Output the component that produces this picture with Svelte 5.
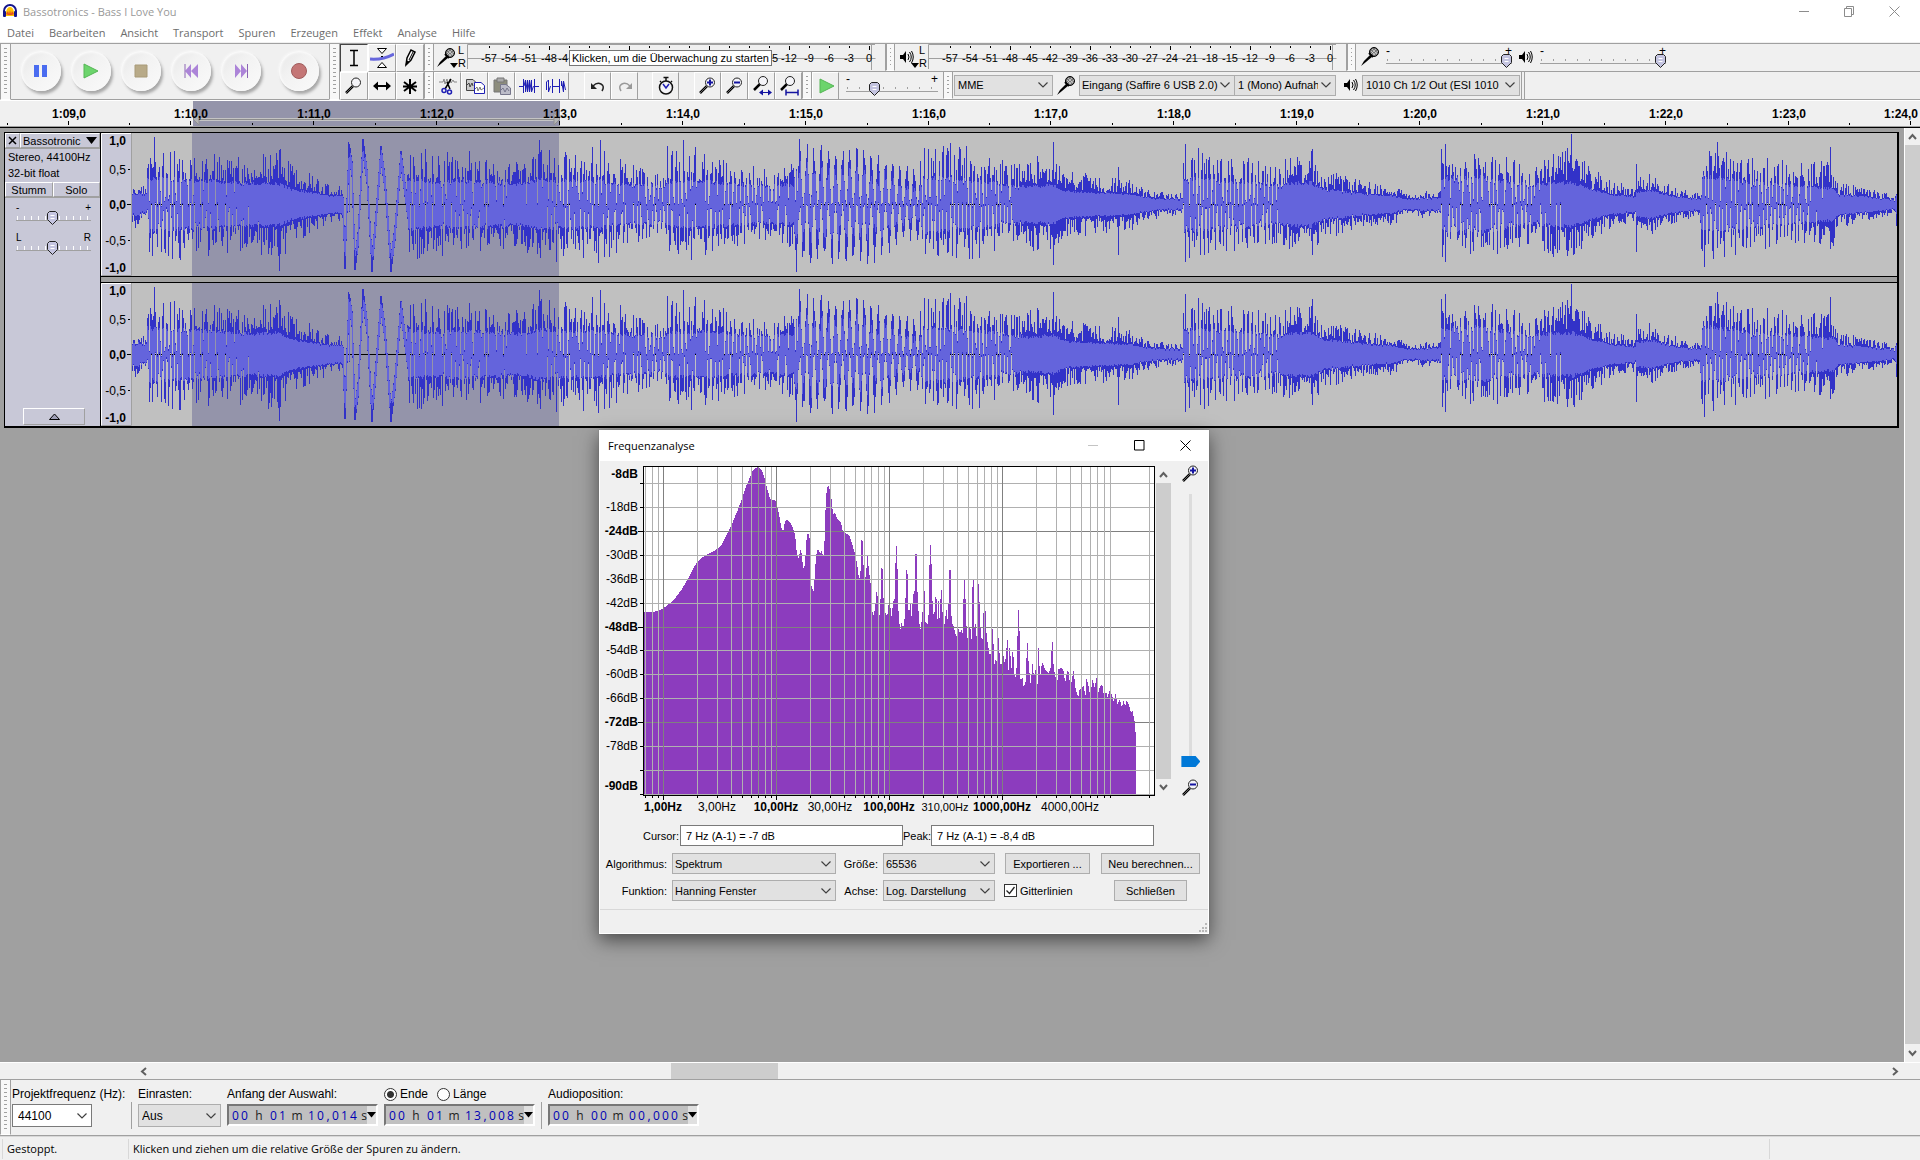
<script>
  // Hüllkurve: [x, Spitze, RMS, Dichte]
  const envelope = [
    [0, 0.36, 0.15, 1], [14, 0.26, 0.15, 1], [15, 0.86, 0.36, 0.2], [60, 0.8, 0.33, 0.3], [110, 0.72, 0.3, 0.5],
    [114, 0.7, 0.28, 0.9], [146, 0.82, 0.29, 1], [160, 0.58, 0.2, 1], [180, 0.44, 0.16, 1], [198, 0.28, 0.12, 1],
    [210, 0.32, 0.13, 1], [211, 0.8, 0.3, 0], [274, 0.82, 0.34, 0.4], [300, 0.78, 0.3, 0.6], [330, 0.8, 0.32, 0.4],
    [365, 0.66, 0.3, 0.7], [390, 0.68, 0.28, 0.9], [408, 0.88, 0.34, 0.8], [430, 0.8, 0.32, 0.5], [468, 0.85, 0.32, 0.4],
    [485, 0.72, 0.28, 0.4], [520, 0.52, 0.26, 0.3], [532, 0.42, 0.24, 0.3], [535, 0.88, 0.3, 0.4], [570, 0.82, 0.32, 0.6],
    [600, 0.7, 0.28, 0.4], [640, 0.5, 0.25, 0.4], [655, 0.66, 0.28, 0.8], [661, 0.6, 0.25, 0.6], [662, 0.92, 0.45, 0],
    [740, 0.84, 0.4, 0], [786, 0.5, 0.2, 0], [792, 0.88, 0.38, 0.4], [830, 0.88, 0.34, 0.4], [870, 0.66, 0.28, 0.4],
    [889, 0.56, 0.25, 0.9], [896, 0.76, 0.24, 0.9], [918, 0.64, 0.26, 1], [922, 0.72, 0.26, 1], [932, 0.5, 0.18, 1],
    [970, 0.42, 0.15, 1], [1000, 0.38, 0.13, 1], [1010, 0.25, 0.1, 1], [1028, 0.18, 0.07, 1], [1050, 0.16, 0.08, 1],
    [1051, 0.85, 0.36, 0.2], [1070, 0.8, 0.34, 0.2], [1120, 0.66, 0.3, 0.3], [1148, 0.6, 0.26, 0.4], [1152, 0.72, 0.28, 0.9],
    [1178, 0.78, 0.3, 1], [1192, 0.52, 0.2, 1], [1220, 0.38, 0.16, 1], [1262, 0.29, 0.11, 1], [1273, 0.17, 0.07, 1],
    [1308, 0.2, 0.09, 1], [1309, 0.82, 0.36, 0.4], [1325, 0.68, 0.36, 0.4], [1350, 0.8, 0.38, 0.4], [1380, 0.66, 0.3, 0.3],
    [1402, 0.56, 0.26, 0.4], [1412, 0.72, 0.28, 0.8], [1440, 0.84, 0.3, 1], [1460, 0.52, 0.2, 1], [1480, 0.34, 0.13, 1],
    [1503, 0.25, 0.1, 1], [1504, 0.5, 0.16, 1], [1520, 0.45, 0.19, 1], [1540, 0.27, 0.11, 1], [1567, 0.18, 0.07, 1],
    [1569, 0.86, 0.38, 0.3], [1590, 0.86, 0.36, 0.3], [1620, 0.66, 0.3, 0.3], [1660, 0.62, 0.26, 0.4], [1694, 0.64, 0.22, 0.5],
    [1701, 0.6, 0.22, 1], [1706, 0.32, 0.14, 1], [1735, 0.26, 0.1, 1], [1762, 0.12, 0.06, 1], [1764, 0.36, 0.12, 1], [1765, 0.36, 0.12, 1]
  ];
  const bassLine = [
    [211, 0], [213, -0.8], [217, 0.78], [220, 0.5], [223, -0.82], [226, -0.5], [231, 0.82], [235, 0.4], [240, -0.84],
    [244, -0.2], [249, 0.72], [253, 0.3], [259, -0.84], [263, -0.4], [269, 0.65], [275, 0]
  ];
  const spikes = { 22: [0.95, 0.4], 147: [0.76, 0.93], 217: [0.84, 0.1], 407: [0.9, 0.6], 468: [0.9, 0.4], 551: [0.9, 0.5], 664: [0.5, 0.95], 667: [0.92, 0.1], 921: [0.88, 0.84], 986: [0.52, 0.7], 1053: [0.84, 0.8], 1180: [0.78, 0.7], 1313: [0.84, 0.8], 1439: [0.98, 0.6], 1504: [0.56, 0.66], 1572: [0.4, 0.88], 1585: [0.88, 0.6], 1698: [0.8, 0.62] };

  const makeRandom = (seed) => () => {
    seed = (seed * 1664525 + 1013904223) % 4294967296;
    return seed / 4294967296;
  };

  const lookup = (points, x) => {
    let i = 1;
    while (i < points.length - 1 && points[i][0] < x) i++;
    const a = points[i - 1];
    const b = points[i];
    const t = Math.min(1, Math.max(0, (x - a[0]) / (b[0] - a[0])));
    return a.slice(1).map((v, k) => v + (b[k + 1] - v) * t);
  };

  const buildWave = (seed) => {
    const rnd = makeRandom(42);
    const vary = makeRandom(seed);
    let peaks = "";
    let rms = "";
    let phase = 0;
    for (let x = 0; x < 1765; x++) {
      const [peak, level, density] = lookup(envelope, x);
      let top;
      let bottom;
      let inner = level;
      const fast = x > 662 && x < 788;
      phase += fast ? 0.88 : 1.3 + rnd() * 0.7;
      const r1 = (0.42 + 0.58 * rnd() ** 1.5) * (0.88 + 0.12 * vary());
      const r2 = (0.42 + 0.58 * rnd() ** 1.5) * (0.88 + 0.12 * vary());
      if (x >= 211 && x < 275) {
        const c1 = lookup(bassLine, x)[0];
        const c2 = lookup(bassLine, x + 1)[0];
        top = Math.max(c1, c2) + 0.1;
        bottom = Math.min(c1, c2) - 0.1;
        inner = 0.7;
      } else {
        const s = Math.sin(phase);
        const amp = peak * (fast ? 0.7 + 0.3 * rnd() : 0.6 + 0.4 * rnd());
        const centre = s * amp * 0.52;
        const half = amp * 0.48;
        const solid = rnd() < density;
        top = solid ? peak * r1 : centre + half;
        bottom = solid ? -peak * r2 : centre - half;
        if (fast) inner = level * (0.7 + 0.6 * rnd());
      }
      if (spikes[x]) {
        top = spikes[x][0];
        bottom = -spikes[x][1];
      }
      peaks += `M${x + 0.5} ${Math.round(71 - top * 71)}V${Math.round(72 - bottom * 71)}`;
      const wobble = inner * (0.9 + 0.2 * vary());
      const innerTop = Math.min(top - 0.02, wobble);
      const innerBottom = Math.max(bottom + 0.02, -wobble);
      if (innerTop > innerBottom) {
        rms += `M${x + 0.5} ${Math.round(71 - innerTop * 71)}V${Math.round(72 - innerBottom * 71)}`;
      }
    }
    return { peaks, rms };
  };

  const channels = [buildWave(7), buildWave(99)];

  const menus = ["Datei", "Bearbeiten", "Ansicht", "Transport", "Spuren", "Erzeugen", "Effekt", "Analyse", "Hilfe"];
  const transport = ["Pause", "Wiedergabe", "Stopp", "Anfang", "Ende", "Aufnahme"];
  const tools = ["Auswahl", "Hüllkurve", "Zeichnen", "Zoom", "Verschieben", "Multi"];
  const meterLabels = Array.from({ length: 20 }, (_, i) => i * 3 - 57);
  // unter dem Hinweistext liegen keine ganzen Zahlen, nur die Ränder schauen heraus
  const coveredLabels = meterLabels.map((label, i) => (i === 4 ? "-4" : i === 14 ? "5" : i > 4 && i < 14 ? "" : label));
  const rulerLabels = Array.from({ length: 16 }, (_, i) => (i === 15 ? "1:24,0" : `1:${String(i + 9).padStart(2, "0")},0`));
  const rulerX = (i) => Math.round(68.5 + i * 122.86);

  const spectrum =
    "134,564 158,564 165,561 180,555 190,547 200,538 210,527 220,512 230,495 240,475 250,455 260,430 270,411 280,400 290,392 300,386 310,380 320,372 330,360 340,335 350,312 360,285 370,255 378,230 385,205 392,180 400,158 405,143 412,133 418,128 424,130 430,140 436,162 442,190 447,213 452,228 462,227 467,240 472,270 476,300 480,318 483,318 486,295 492,285 498,292 505,305 510,325 514,350 516,388 521,402 525,375 529,390 531,425 534,435 537,410 540,350 543,328 546,328 548,345 550,440 553,490 558,500 561,450 564,395 568,373 574,388 578,378 582,400 585,350 588,235 591,190 594,183 597,193 601,190 603,240 607,270 611,263 616,283 625,292 630,318 638,328 646,332 652,352 660,385 666,417 671,470 675,435 677,340 679,340 681,405 684,462 688,458 691,395 693,395 695,440 699,470 702,545 706,577 711,550 714,502 716,502 719,560 723,578 726,432 729,432 731,515 735,565 741,575 744,540 748,540 751,580 756,530 760,520 762,366 765,366 767,470 769,570 773,620 777,590 780,615 785,575 788,438 791,438 793,555 796,560 798,530 801,577 805,512 809,500 811,388 814,388 816,505 818,550 820,595 825,624 827,562 829,562 831,500 834,500 836,600 840,595 843,605 844,510 847,363 849,363 851,425 853,525 857,588 861,512 863,512 865,610 867,530 869,530 871,592 874,498 876,498 878,560 881,620 885,580 888,558 891,590 893,540 895,438 898,438 900,570 903,600 907,610 912,640 917,612 922,628 925,615 929,632 931,465 933,465 936,545 939,650 943,625 947,600 950,655 953,465 956,465 958,650 959,585 963,640 965,480 969,480 971,580 974,640 978,645 980,565 985,560 988,640 992,670 996,695 999,680 1001,615 1004,615 1006,725 1010,705 1014,715 1016,640 1018,640 1021,720 1025,718 1028,680 1032,715 1036,700 1038,648 1040,648 1042,740 1044,670 1046,670 1049,740 1053,665 1057,750 1060,760 1064,700 1065,558 1068,558 1070,645 1072,770 1077,760 1080,790 1085,770 1088,655 1090,655 1092,720 1097,780 1102,715 1105,755 1110,735 1115,790 1116,670 1118,670 1120,770 1125,713 1130,725 1135,740 1142,745 1147,730 1150,653 1152,653 1154,725 1158,755 1163,780 1166,735 1172,730 1178,735 1183,775 1188,740 1192,745 1196,800 1200,760 1204,738 1208,790 1215,820 1219,795 1224,790 1229,785 1233,820 1236,760 1240,780 1245,815 1251,765 1256,790 1261,760 1265,805 1270,785 1275,780 1280,820 1284,800 1288,818 1294,798 1299,810 1303,830 1308,810 1313,840 1319,825 1324,850 1328,828 1332,845 1336,828 1341,840 1346,865 1350,858 1354,885 1357,895 1358,945 1359,1110 134,1110";

  const freqX = (hz) => Math.round(63 + Math.log10(hz) * 113);
  const freqLines = [];
  for (const decade of [0.1, 1, 10, 100, 1000]) {
    for (let n = 1; n < 10; n++) {
      if (n * decade >= 0.69) freqLines.push({ x: freqX(n * decade), major: n === 1 });
    }
  }
  freqLines.push({ x: freqX(20000), major: false });
  const freqLabels = [[1, "1,00Hz", 1], [3, "3,00Hz", 0], [10, "10,00Hz", 1], [30, "30,00Hz", 0], [100, "100,00Hz", 1], [310, "310,00Hz", 2], [1000, "1000,00Hz", 1], [4000, "4000,00Hz", 0]];
  const dbLines = Array.from({ length: 14 }, (_, i) => ({ y: Math.round(22 + i * 23.92), major: i % 4 === 2 }));
  const dbLabels = [[13, "-8dB", 1], [46, "-18dB", 0], [70, "-24dB", 1], [94, "-30dB", 0], [118, "-36dB", 0], [142, "-42dB", 0], [166, "-48dB", 1], [189, "-54dB", 0], [213, "-60dB", 0], [237, "-66dB", 0], [261, "-72dB", 1], [285, "-78dB", 0], [325, "-90dB", 1]];

  let sampleRate = $state("44100");
  let rangeEnd = $state("ende");
  let grid = $state(true);
  let cursorText = $state("7 Hz (A-1) = -7 dB");
  let peakText = $state("7 Hz (A-1) = -8,4 dB");
</script>

{#snippet mic()}
  <svg class="mic" width="18" height="19" viewBox="0 0 18 19">
    <path d="M0 19 3 14 10 7 12 9 5 15Z" fill="#000" />
    <circle cx="13" cy="5" r="4.5" fill="#777" stroke="#000" />
    <path d="M10 4 14 8M11 2 16 7M10 7 15 2M12 8 17 4" stroke="#ddd" stroke-width=".7" />
    <path d="M8 6 12 10" stroke="#000" stroke-width="2" />
  </svg>
{/snippet}

{#snippet speaker()}
  <svg width="14" height="14" viewBox="0 0 14 14">
    <path d="M0 5H3L6 1V13L3 9H0Z" fill="#000" />
    <path d="M8 4Q10 7 8 10M9.500 2Q13 7 9.500 12M11.500 1Q15 7 11.500 13" fill="none" stroke="#000" />
  </svg>
{/snippet}

{#snippet lens(kind)}
  <svg width="20" height="20" viewBox="0 0 20 20">
    {#if kind === "sel" || kind === "fit"}
      <path d="M2 14 8 8" stroke="#000" stroke-width="2.500" />
      <circle cx="11" cy="5" r="4.500" fill="#f4f4f8" stroke="#222" />
    {:else}
      <path d="M2 17 9 10" stroke="#000" stroke-width="2.500" />
      <path d="M2 17 9 10" stroke="#aaa" stroke-width=".6" />
      <circle cx="12" cy="6.500" r="4.500" fill="#f4f4f8" stroke="#222" />
    {/if}
    {#if kind === "in"}<path d="M12 3.500V9.500M9 6.500H15" stroke="#1414a0" stroke-width="2" />{/if}
    {#if kind === "out"}<path d="M9 6.500H15" stroke="#1414a0" stroke-width="2" />{/if}
    {#if kind === "sel"}<path d="M8 16.500H19" stroke="#1414a0" /><path d="M7 16.500 11 13.500V19.500ZM20 16.500 16 13.500V19.500Z" fill="#1414a0" />{/if}
    {#if kind === "fit"}<path d="M7 16.500H19M7 13.500V19.500M19 13.500V19.500" stroke="#1414a0" stroke-width="1.500" />{/if}
  </svg>
{/snippet}

{#snippet meter(labels)}
  <svg class="meter" width="409" height="27">
    <path d="M.5 25V.5H408M.5 14.500H408.500M404.500 1V26" fill="none" stroke="#a0a0a0" />
    {#each labels as label, i}
      <path d="M{i * 20 + 22.5} 2V{i % 4 === 3 ? 6 : 4}" stroke="#000" />
      {#if label === "-4"}
        <text x="101" y="18" text-anchor="end">{label}</text>
      {:else if label === "5"}
        <text x="305" y="18">{label}</text>
      {:else}
        <text x={i * 20 + 22} y="18" text-anchor="middle">{label}</text>
      {/if}
    {/each}
  </svg>
{/snippet}

{#snippet timeField(label, parts)}
  <div class="time-field" role="group" aria-label={label}>
    {#each parts as part}
      {#if part === ","}
        <span class="comma">,</span>
      {:else if part.length === 1}
        <span class="unit">{part}</span>
      {:else}
        {#each part as digit}<span class="digit">{digit}</span>{/each}
      {/if}
    {/each}
    <button class="time-format" aria-label="Format">
      <svg width="9" height="6" viewBox="0 0 9 6"><path d="M0 0H9L4.500 5.500Z" /></svg>
    </button>
  </div>
{/snippet}

<div class="app">
  <header class="titlebar">
    <svg width="16" height="16" viewBox="0 0 16 16">
      <path d="M2 12V8A6 6 0 0 1 14 8V12" fill="none" stroke="#14148c" stroke-width="2" />
      <path d="M4 13V9Q5 4 8 4T12 9V13Z" fill="#ffc400" />
      <path d="M4 11 6 8 7 11 8 7 9 11 10 8 12 11 10 12H6Z" fill="#e8501e" />
      <rect x="1" y="8" width="3" height="6" rx="1" fill="#14148c" />
      <rect x="12" y="8" width="3" height="6" rx="1" fill="#14148c" />
    </svg>
    <span class="title">Bassotronics - Bass I Love You</span>
    <button aria-label="Minimieren"><svg width="11" height="11"><path d="M0 5.500H10" stroke="#8c8c8c" /></svg></button>
    <button aria-label="Wiederherstellen"><svg width="11" height="11"><path d="M.5 2.500H7.500V10.500H.5ZM2.500 2V.5H9.500V8.500H8" fill="none" stroke="#8c8c8c" /></svg></button>
    <button aria-label="Beenden"><svg width="11" height="11"><path d="M.5.5 10.500 10.500M10.500.5.5 10.500" stroke="#8c8c8c" /></svg></button>
  </header>

  <nav class="menubar">
    {#each menus as menu}
      <button>{menu}</button>
    {/each}
  </nav>

  <div class="toolbars">
    <div class="grip"></div>
    <div class="transport">
      {#each transport as name, i}
        <button class="round" class:record={i === 5} aria-label={name}>
          <svg width="20" height="20" viewBox="0 0 20 20">
            {#if i === 0}<path d="M3 4H8V16H3ZM11 4H16V16H11Z" fill="#4a6cf0" />{/if}
            {#if i === 1}<path d="M3 3 17 10 3 17Z" fill="#6cd46c" stroke="#55b655" />{/if}
            {#if i === 2}<path d="M4 4H16V16H4Z" fill="#b8aa88" stroke="#a89a78" />{/if}
            {#if i === 3}<path d="M10 3V17L4 10ZM17 3V17L10 10Z" fill="#ac84d8" /><path d="M4 3V17" stroke="#8c64b4" />{/if}
            {#if i === 4}<path d="M4 3V17L10 10ZM10 3V17L16 10Z" fill="#ac84d8" /><path d="M16.500 3V17" stroke="#8c64b4" />{/if}
            {#if i === 5}<circle cx="10" cy="10" r="7.500" fill="#c47676" stroke="#a05c5c" />{/if}
          </svg>
        </button>
      {/each}
    </div>
    <div class="grip"></div>
    <div class="tools">
      {#each tools as tool, i}
        <button class="tool" class:pressed={i === 0} aria-label={tool}>
          {#if i === 3}
            {@render lens("")}
          {:else}
            <svg width="24" height="22" viewBox="0 0 24 22">
              {#if i === 0}<path d="M8 3.500H16M8 18.500H16M12 4V18" stroke="#000" stroke-width="1.500" />{/if}
              {#if i === 1}<path d="M0 12Q13 13 24 7" fill="none" stroke="#6666dc" stroke-width="3" /><path d="M7.500 1.500H16.500L12 6.500ZM7.500 20.500H16.500L12 15.500ZM11 9.500H13" fill="#fff" stroke="#000" />{/if}
              {#if i === 2}<path d="M8 18 9 11 13 3 17 5 13 13Z" fill="#fff" stroke="#000" stroke-width="1.500" /><path d="M8 18 9 14 11 15ZM11 13 15 5" stroke="#000" />{/if}
              {#if i === 4}<path d="M4 11H20" stroke="#000" stroke-width="2" /><path d="M3 11 8 6.500V15.500ZM21 11 16 6.500V15.500Z" />{/if}
              {#if i === 5}<path d="M12 4V19M6 7 18 16M18 7 6 16M5 11.500H19" stroke="#000" stroke-width="2" />{/if}
            </svg>
          {/if}
        </button>
      {/each}
    </div>

    <div class="rows">
      <div class="row">
        <div class="grip"></div>
        <div class="meter-head">
          {@render mic()}
          <svg class="drop" width="8" height="5"><path d="M0 0H8L4 5Z" /></svg>
          <span>L</span><span>R</span>
        </div>
        <div class="meter-wrap">
          {@render meter(coveredLabels)}
          <div class="tooltip">Klicken, um die Überwachung zu starten</div>
        </div>
        <div class="grip far"></div>
        <div class="meter-head">
          {@render speaker()}
          <svg class="drop" width="8" height="5"><path d="M0 0H8L4 5Z" /></svg>
          <span>L</span><span>R</span>
        </div>
        {@render meter(meterLabels)}
        <div class="grip far"></div>
        <div class="mixer">
          {@render mic()}
          <label class="range"><span>-</span><span>+</span><input type="range" value="100" aria-label="Aufnahmelautstärke" /></label>
          {@render speaker()}
          <label class="range"><span>-</span><span>+</span><input type="range" value="100" aria-label="Wiedergabelautstärke" /></label>
        </div>
      </div>

      <div class="row">
        <div class="grip"></div>
        <button class="tool" aria-label="Ausschneiden">
          <svg width="20" height="20"><path d="M1 6H5L6 3 7 8 9 3 10 8 12 3 13 7 15 4 16 6H19" fill="none" stroke="#888" /><path d="M13 3 7 13M9 6 12 13" stroke="#000" stroke-width="1.500" /><circle cx="6" cy="14.500" r="2" fill="none" stroke="#1e1eb4" stroke-width="1.500" /><circle cx="11.500" cy="16" r="2" fill="none" stroke="#1e1eb4" stroke-width="1.500" /></svg>
        </button>
        <button class="tool" aria-label="Kopieren">
          <svg width="20" height="20"><path d="M1.500 3.500H8L10.500 6V14.500H1.500Z" fill="#ccc" stroke="#444" /><path d="M2 9 4 7 5 11 7 7 8 10" fill="none" stroke="#444" /><path d="M9.500 6.500H16L19.500 9.500V17.500H9.500Z" fill="#fff" stroke="#1e1eb4" /><path d="M10 13 12 11 13 15 15 11 16 14 19 12" fill="none" stroke="#777" /></svg>
        </button>
        <button class="tool" aria-label="Einfügen">
          <svg width="20" height="20"><path d="M2 4H15V16H2Z" fill="#8c8c7c" stroke="#777" /><path d="M5 2H12V6H5Z" fill="#aaa" stroke="#777" /><path d="M8.500 8.500H14L18.500 12V18.500H8.500Z" fill="#bcbcc8" stroke="#77778c" /><path d="M9 14 11 12 13 16 15 12 17 15" fill="none" stroke="#77778c" /></svg>
        </button>
        <button class="tool" aria-label="Trimmen">
          <svg width="20" height="20"><path d="M0 10.500H4.500M4.500 3V17M15.500 3V17M15.500 10.500H20" stroke="#1e1eb4" /><path d="M5 10 6.500 4V16L8.500 4V16L10.500 4V16L12.500 4V16L14.500 10" fill="none" stroke="#1e1eb4" /></svg>
        </button>
        <button class="tool" aria-label="Stille">
          <svg width="20" height="20"><path d="M.5 14V6L2.500 4V16L4.500 10M6.500 3V17M6.500 10.500H13.500M13.500 3V17M15.500 10V5L17.500 16V5L19.500 14" fill="none" stroke="#1e1eb4" /></svg>
        </button>
        <button class="tool spaced" aria-label="Rückgängig">
          <svg width="20" height="20"><path d="M5 10Q9 6 13 8 17 10 14 15" fill="none" stroke="#222" stroke-width="1.500" /><path d="M3 7V13H9Z" fill="#222" /></svg>
        </button>
        <button class="tool" aria-label="Wiederholen">
          <svg width="20" height="20"><path d="M15 10Q11 6 7 8 3 10 6 15" fill="none" stroke="#999" stroke-width="1.500" /><path d="M17 7V13H11Z" fill="#999" /></svg>
        </button>
        <button class="tool timer" aria-label="Sync-Lock">
          <svg width="20" height="20"><circle cx="10" cy="11.500" r="6.500" fill="#f4f4f8" stroke="#111" stroke-width="1.500" /><path d="M10 5V2M7.500 1.500H12.500M4 6 5 5M15 5 16 6" stroke="#111" stroke-width="1.500" /><path d="M7 8 10 12 13 8" fill="none" stroke="#1e1eb4" stroke-width="1.500" /></svg>
        </button>
        <button class="tool spaced" aria-label="Vergrößern">{@render lens("in")}</button>
        <button class="tool" aria-label="Verkleinern">{@render lens("out")}</button>
        <button class="tool" aria-label="Auswahl einpassen">{@render lens("sel")}</button>
        <button class="tool" aria-label="Projekt einpassen">{@render lens("fit")}</button>
        <div class="grip"></div>
        <button class="tool" aria-label="Mit Geschwindigkeit abspielen">
          <svg width="20" height="20"><path d="M4 3 18 10 4 17Z" fill="#6cd46c" stroke="#55b655" /></svg>
        </button>
        <label class="range speed"><span>-</span><span>+</span><input type="range" value="28" aria-label="Geschwindigkeit" /></label>
        <div class="grip"></div>
        <div class="devices">
          <select class="host" aria-label="Host"><option>MME</option></select>
          {@render mic()}
          <select class="input" aria-label="Eingang"><option>Eingang (Saffire 6 USB 2.0)</option></select>
          <select class="mono" aria-label="Kanäle"><option>1 (Mono) Aufnahmekanal</option></select>
          {@render speaker()}
          <select class="output" aria-label="Ausgang"><option>1010 Ch 1/2 Out (ESI 1010 .</option></select>
        </div>
        <div class="row-end"></div>
      </div>
    </div>
  </div>

  <svg class="ruler" width="100%" height="26">
    <rect x="193" width="367" height="25" fill="#9494aa" />
    <path d="M199 18.500H554" stroke="#c4c4c4" stroke-width="3" />
    <path d="M199 18.500H554" stroke="#8c8c8c" />
    <path d="M193 18 199 12V24ZM560 18 554 12V24Z" fill="#b4b4b4" stroke="#909090" />
    {#each rulerLabels as label, i}
      <path d="M{rulerX(i) - 0.5} 20V24M{rulerX(i) - 61.5} 22V24" stroke="#000" />
      <text x={i === 15 ? 1901 : rulerX(i)} y="17" text-anchor="middle">{label}</text>
    {/each}
  </svg>

  <main class="workspace">
    <div class="canvas">
      <section class="track">
        <div class="panel">
          <div class="track-title">
            <button aria-label="Spur schließen"><svg width="9" height="9"><path d="M1 1 8 8M8 1 1 8" stroke="#000" stroke-width="1.500" /></svg></button>
            <button class="name">Bassotronic <svg width="11" height="7"><path d="M0 0H11L5.500 7Z" /></svg></button>
          </div>
          <p>Stereo, 44100Hz</p>
          <p>32-bit float</p>
          <div class="mutes"><button>Stumm</button><button>Solo</button></div>
          <label class="range gain"><span>-</span><span>+</span><input type="range" value="48" aria-label="Lautstärke" /></label>
          <label class="range gain"><span>L</span><span>R</span><input type="range" value="48" aria-label="Balance" /></label>
          <button class="collapse" aria-label="Einklappen"><svg width="11" height="7"><path d="M.5 6.500H10.500L5.500 1Z" fill="#9c9cb4" stroke="#000" /></svg></button>
        </div>
        <div class="channels">
          {#each channels as channel}
            <div class="channel">
              <svg class="scale" width="31" height="143">
                <path d="M.5 142V.5H30" fill="none" stroke="#fff" />
                <path d="M1 142.500H30.500V0" fill="none" stroke="#a0a0a0" />
                <g text-anchor="end">
                  <text class="bold" x="25" y="12">1,0</text>
                  <text x="25" y="41">0,5</text>
                  <text class="bold" x="25" y="76">0,0</text>
                  <text x="25" y="112">-0,5</text>
                  <text class="bold" x="25" y="139">-1,0</text>
                </g>
                <path d="M27 36.500H29M26 71.500H30M27 107.500H29" stroke="#000" />
              </svg>
              <svg class="wave" viewBox="0 0 1765 143" preserveAspectRatio="none" shape-rendering="crispEdges">
                <rect width="1765" height="143" fill="#c0c0c0" />
                <rect x="60" width="367" height="143" fill="#9494aa" />
                <path d="M0 71.500H1765" stroke="#000" />
                <path d={channel.peaks} stroke="#3232c8" />
                <path d={channel.rms} stroke="#6464dc" />
              </svg>
            </div>
          {/each}
        </div>
      </section>
    </div>
    <div class="vscroll">
      <button aria-label="Nach oben"><svg width="9" height="7"><path d="M1 6 4.500 2 8 6" fill="none" stroke="#606060" stroke-width="2" /></svg></button>
      <div class="thumb"></div>
      <button aria-label="Nach unten"><svg width="9" height="7"><path d="M1 1 4.500 5 8 1" fill="none" stroke="#606060" stroke-width="2" /></svg></button>
    </div>
  </main>

  <div class="hscroll">
    <button aria-label="Nach links"><svg width="7" height="9"><path d="M6 1 2 4.500 6 8" fill="none" stroke="#606060" stroke-width="2" /></svg></button>
    <div class="rail"><div class="thumb"></div></div>
    <button aria-label="Nach rechts"><svg width="7" height="9"><path d="M1 1 5 4.500 1 8" fill="none" stroke="#606060" stroke-width="2" /></svg></button>
  </div>

  <div class="selection">
    <div class="grip"></div>
    <div class="field rate">
      <label for="rate">Projektfrequenz (Hz):</label>
      <select id="rate" bind:value={sampleRate}><option>44100</option></select>
    </div>
    <div class="divider"></div>
    <div class="field snap">
      <label for="snap">Einrasten:</label>
      <select id="snap"><option>Aus</option></select>
    </div>
    <div class="field">
      <span>Anfang der Auswahl:</span>
      {@render timeField("Anfang der Auswahl", ["00", "h", "01", "m", "10", ",", "014", "s"])}
    </div>
    <div class="field">
      <div class="radios">
        <label><input type="radio" bind:group={rangeEnd} value="ende" />Ende</label>
        <label><input type="radio" bind:group={rangeEnd} value="laenge" />Länge</label>
      </div>
      {@render timeField("Ende", ["00", "h", "01", "m", "13", ",", "008", "s"])}
    </div>
    <div class="divider"></div>
    <div class="field">
      <span>Audioposition:</span>
      {@render timeField("Audioposition", ["00", "h", "00", "m", "00", ",", "000", "s"])}
    </div>
  </div>

  <footer class="status">
    <span>Gestoppt.</span>
    <span>Klicken und ziehen um die relative Größe der Spuren zu ändern.</span>
    <span></span>
  </footer>

  <div class="dialog" role="dialog" aria-label="Frequenzanalyse">
    <header>
      <h2>Frequenzanalyse</h2>
      <button aria-label="Minimieren"><svg width="11" height="11"><path d="M0 5.500H10" stroke="#c4c4c4" /></svg></button>
      <button aria-label="Maximieren"><svg width="11" height="11"><path d="M.5.5H10V10H.5Z" fill="none" stroke="#000" /></svg></button>
      <button aria-label="Schließen"><svg width="11" height="11"><path d="M.5.5 10.500 10.500M10.500.5.5 10.500" stroke="#000" /></svg></button>
    </header>
    <div class="plot-row">
      <svg class="plot" width="556" height="356">
        <rect x="43" y="5" width="512" height="329" fill="#fff" />
        <svg x="43" y="5" width="512" height="328" viewBox="134 125 1272 984" preserveAspectRatio="none" shape-rendering="crispEdges">
          <polygon points={spectrum} fill="#8c3cbe" />
        </svg>
        {#if grid}
          {#each dbLines as line}
            <path d="M43 {line.y + 0.5}H555" stroke={line.major ? "#808080" : "#b0b0b0"} />
          {/each}
          {#each freqLines as line}
            <path d="M{line.x + 0.5} 5V334" stroke={line.major ? "#808080" : "#b0b0b0"} />
          {/each}
          <path d="M158.500 5V334" stroke="#8c8c8c" />
        {/if}
        <rect x="43.500" y="5.500" width="511" height="329" fill="none" stroke="#000" />
        {#each dbLines as line}
          <path d="M{line.major ? 38 : 40} {line.y + 0.5}H43" stroke="#000" />
        {/each}
        {#each freqLines as line}
          <path d="M{line.x + 0.5} 335V{line.major ? 339 : 337}" stroke="#000" />
        {/each}
        {#each dbLabels as [y, label, bold]}
          <text class:bold x="38" y={y + 4} text-anchor="end">{label}</text>
        {/each}
        {#each freqLabels as [hz, label, kind]}
          <text class:bold={kind === 1} class:small={kind === 2} x={freqX(hz)} y="350" text-anchor="middle">{label}</text>
        {/each}
      </svg>
      <div class="vscroll">
        <button aria-label="Hoch"><svg width="9" height="7"><path d="M1 6 4.500 2 8 6" fill="none" stroke="#606060" stroke-width="2" /></svg></button>
        <div class="thumb"></div>
        <button aria-label="Runter"><svg width="9" height="7"><path d="M1 1 4.500 5 8 1" fill="none" stroke="#606060" stroke-width="2" /></svg></button>
      </div>
      <div class="zoom">
        {@render lens("in")}
        <input type="range" value="100" aria-label="Zoom" />
        {@render lens("out")}
      </div>
    </div>
    <div class="readout">
      <label for="cursor">Cursor:</label><input id="cursor" bind:value={cursorText} />
      <label for="peak">Peak:</label><input id="peak" bind:value={peakText} />
    </div>
    <div class="options">
      <label for="algorithm">Algorithmus:</label>
      <select id="algorithm"><option>Spektrum</option></select>
      <label for="size">Größe:</label>
      <select id="size"><option>65536</option></select>
      <button>Exportieren ...</button>
      <button>Neu berechnen...</button>
      <label for="window">Funktion:</label>
      <select id="window"><option>Hanning Fenster</option></select>
      <label for="axis">Achse:</label>
      <select id="axis"><option>Log. Darstellung</option></select>
      <label class="check"><input type="checkbox" bind:checked={grid} />Gitterlinien</label>
      <button class="close">Schließen</button>
    </div>
    <div class="dialog-status">
      <svg width="10" height="10" fill="#b8b8b8"><path d="M7 0H9V2H7ZM7 4H9V6H7ZM4 4H6V6H4ZM7 7H9V9H7ZM4 7H6V9H4ZM1 7H3V9H1Z" /></svg>
    </div>
  </div>
</div>

<style>
  :global(body) {
    margin: 0;
    overflow: hidden;
  }

  .app {
    display: flex;
    flex-direction: column;
    height: 100vh;
    background: #f0f0f0;
    color: #000;
    font-family: "Liberation Sans", Arial, sans-serif;
    font-size: 12px;
    position: relative;
    --chevron: url("data:image/svg+xml,%3Csvg xmlns='http://www.w3.org/2000/svg' width='10' height='6'%3E%3Cpath d='M.5.5 5 5 9.500.5' fill='none' stroke='%23404040' stroke-width='1.200'/%3E%3C/svg%3E");
    --thumb: url("data:image/svg+xml,%3Csvg xmlns='http://www.w3.org/2000/svg' width='11' height='14'%3E%3Cpath d='M2.500.5H8.500L10.500 2.500V8.500L5.500 13.500.5 8.500V2.500Z' fill='%23c4c4e0' stroke='%23222'/%3E%3Cpath d='M3.500 4.500H7.500M3.500 7.500H7.500' stroke='%23fff'/%3E%3C/svg%3E");
  }

  button {
    display: flex;
    align-items: center;
    justify-content: center;
    padding: 0;
    border: 0;
    background: none;
    color: inherit;
    font: inherit;
  }

  svg {
    display: block;
    flex: none;
  }

  select {
    box-sizing: border-box;
    appearance: none;
    height: 21px;
    padding: 0 17px 0 3px;
    border: 1px solid #adadad;
    border-radius: 0;
    background: #e1e1e1 var(--chevron) no-repeat right 4px center;
    color: #000;
    font-family: inherit;
    font-size: 11px;
  }

  .titlebar {
    display: flex;
    align-items: center;
    height: 22px;
    padding: 0 3px 0 2px;
    background: #fff;
    color: #999;
    font-family: "Open Sans", sans-serif;
    font-size: 11px;
  }

  .title {
    flex: 1;
    margin-left: 5px;
  }

  .titlebar button {
    width: 45px;
    height: 20px;
  }

  .menubar {
    display: flex;
    height: 20px;
    border-bottom: 1px solid #f0f0f0;
    background: #fff;
    color: #6d6d6d;
    font-family: "Open Sans", sans-serif;
    font-size: 11px;
  }

  .menubar button {
    padding: 0 8px 0 7px;
  }

  .toolbars {
    display: flex;
    height: 56px;
    border-top: 1px solid #a0a0a0;
  }

  .grip {
    box-sizing: border-box;
    width: 11px;
    flex: none;
    border: 1px solid #a0a0a0;
    border-top: 0;
    border-bottom-color: #fff;
    padding: 4px 3px;
    background: repeating-linear-gradient(#a0a0a0 0 1px, transparent 1px 4px) content-box, #f8f8f8;
  }

  .transport {
    display: flex;
    align-items: center;
    width: 318px;
    gap: 10px;
    padding: 0 0 1px 10px;
    box-sizing: border-box;
    border-bottom: 1px solid #a0a0a0;
  }

  .round {
    width: 40px;
    height: 40px;
    border-radius: 50%;
    background: linear-gradient(135deg, #e6e6e6, #f2f2f2 40%, #fafafa);
    box-shadow: 2px 3px 3px #a8a8a8, 0 0 3px #fff, inset 1px 1px 3px #fff;
  }

  .record {
    margin-left: 8px;
  }

  .tools {
    display: grid;
    grid-template-columns: repeat(3, 28px);
    grid-template-rows: repeat(2, 28px);
  }

  .tool {
    box-sizing: border-box;
    width: 27px;
    height: 28px;
    flex: none;
    padding-bottom: 1px;
    border: 1px solid #a0a0a0;
    border-top-color: #fff;
    border-left-color: #fff;
  }

  .tools .tool {
    width: 28px;
  }

  .tools .pressed {
    border-color: #444 #fff #fff #444;
  }

  .rows {
    flex: 1;
    min-width: 0;
  }

  .row {
    box-sizing: border-box;
    display: flex;
    height: 28px;
    border-bottom: 1px solid #a0a0a0;
  }

  .row .grip {
    width: 10px;
  }

  .row .tool {
    height: 27px;
    border-bottom: 0;
  }

  .spaced {
    margin-left: 15px;
  }

  .timer {
    margin: 0 0 0 14px;
  }

  .meter-head {
    display: grid;
    grid-template-columns: 24px 8px;
    grid-template-rows: 13px 13px;
    align-items: center;
    width: 33px;
    position: relative;
  }

  .meter-head > svg:first-child {
    grid-row: 1 / 3;
    justify-self: center;
  }

  .meter-head span {
    grid-column: 2;
    font-size: 11px;
    line-height: 13px;
  }

  .drop {
    position: absolute;
    left: 16px;
    bottom: 3px;
  }

  .meter-wrap {
    position: relative;
  }

  .meter text {
    font-size: 11px;
  }

  .tooltip {
    position: absolute;
    left: 102px;
    top: 6px;
    padding: 0 2px;
    border: 1px solid #767676;
    background: #fff;
    font-size: 11px;
    line-height: 14px;
    white-space: nowrap;
    z-index: 1;
  }

  .row .far {
    margin-left: 9px;
    border-left-width: 2px;
  }

  .mixer {
    display: flex;
    align-items: center;
    gap: 7px;
    padding: 0 0 2px 5px;
  }

  .range {
    display: grid;
    grid-template-columns: 1fr 1fr;
    width: 126px;
    line-height: 8px;
    align-content: center;
  }

  .range span:nth-child(2) {
    justify-self: end;
  }

  .range input {
    grid-column: 1 / 3;
    appearance: none;
    width: 100%;
    height: 12px;
    margin: 0;
    background:
      linear-gradient(#a0a0a0, #a0a0a0) 0 8px / 100% 1px no-repeat,
      repeating-linear-gradient(90deg, #a0a0a0 0 1px, transparent 1px 12px) 1px 4px / 100% 2px no-repeat;
  }

  .range input::-webkit-slider-thumb {
    appearance: none;
    width: 11px;
    height: 14px;
    border: 0;
    background: var(--thumb);
  }

  .speed {
    width: 92px;
    margin: 0 5px 2px 7px;
  }

  .devices {
    display: flex;
    align-items: center;
    gap: 4px;
    margin-left: 1px;
    padding-bottom: 1px;
  }

  .host {
    width: 99px;
  }

  .input {
    width: 156px;
    padding-right: 15px;
    padding-left: 2px;
  }

  .mono {
    width: 102px;
    margin: 0 4px 0 -5px;
  }

  .output {
    width: 158px;
  }

  .row-end {
    width: 2px;
    margin-left: 1px;
    border: 1px solid #a0a0a0;
    border-width: 0 1px;
  }

  .ruler {
    border-top: 1px solid #fff;
    border-bottom: 1px solid #000;
    box-shadow: inset 0 -1px #a0a0a0;
  }

  .ruler text {
    font-size: 12px;
    font-weight: bold;
  }

  .workspace {
    flex: 1;
    display: flex;
    min-height: 0;
    background: #a0a0a0;
  }

  .canvas {
    flex: 1;
    min-width: 0;
    padding: 4px 5px 0 4px;
  }

  .track {
    display: flex;
    border: 1px solid #000;
    border-width: 1px 2px 2px 1px;
  }

  .panel {
    display: flex;
    flex-direction: column;
    width: 95px;
    flex: none;
    border-right: 1px solid #000;
    background: #c8c8d7;
    font-size: 11px;
  }

  .track-title,
  .mutes {
    display: flex;
    height: 15px;
    border-bottom: 1px solid #a0a0a0;
  }

  .track-title button,
  .mutes button,
  .collapse {
    box-sizing: border-box;
    width: 15px;
    border: 1px solid #a0a0a0;
    border-top-color: #fff;
    border-left-color: #fff;
  }

  .track-title .name {
    flex: 1;
    justify-content: space-between;
    padding: 0 2px;
  }

  .panel p {
    margin: 0 3px;
    line-height: 16px;
  }

  .mutes {
    margin-top: 1px;
  }

  .mutes button {
    flex: 1;
  }

  .gain {
    width: 75px;
    margin: 6px 0 4px 11px;
  }

  .gain input {
    background:
      linear-gradient(#a0a0a0, #a0a0a0) 0 8px / 100% 1px no-repeat,
      repeating-linear-gradient(90deg, #fff 0 1px, transparent 1px 7px) 1px 4px / 100% 4px no-repeat;
  }

  .gain span {
    font-size: 10px;
  }

  .collapse {
    width: 62px;
    height: 17px;
    margin: auto auto 1px 18px;
  }

  .channels {
    flex: 1;
    min-width: 0;
    display: grid;
    gap: 7px;
    background: #a0a0a0;
  }

  .channel {
    display: flex;
    box-shadow: 0 0 0 1px #000;
    clip-path: inset(-1px 0 -1px 0);
  }

  .scale {
    background: #c8c8d7;
  }

  .scale text,
  .plot text {
    font-size: 12px;
  }

  .bold {
    font-weight: bold;
  }

  .wave {
    flex: 1;
    min-width: 0;
    width: 100%;
    height: 143px;
  }

  .vscroll {
    display: flex;
    flex-direction: column;
    width: 15px;
    border-left: 1px solid #fff;
    background: #f0f0f0;
  }

  .vscroll button {
    height: 17px;
  }

  .vscroll .thumb {
    flex: 1;
    background: #cdcdcd;
  }

  .workspace .vscroll button:last-child {
    height: 18px;
  }

  .hscroll {
    display: flex;
    height: 16px;
    padding: 0 16px 0 135px;
    border-top: 1px solid #fff;
  }

  .hscroll button {
    width: 17px;
  }

  .rail {
    flex: 1;
  }

  .rail .thumb {
    width: 6.2%;
    height: 100%;
    margin-left: 29.9%;
    background: #cdcdcd;
  }

  .selection {
    display: flex;
    gap: 6px;
    height: 55px;
    border-top: 1px solid #a0a0a0;
    border-bottom: 1px solid #a0a0a0;
  }

  .selection .grip {
    margin-right: -5px;
  }

  .field {
    display: flex;
    flex-direction: column;
    padding-top: 4px;
    line-height: 20px;
  }

  .field select {
    height: 23px;
    font-size: 12px;
  }

  .rate {
    width: 113px;
    white-space: nowrap;
  }

  .rate select {
    width: 80px;
    padding-left: 5px;
    border-color: #7a7a7a;
    background-color: #fff;
  }

  .snap {
    width: 83px;
  }

  .divider {
    width: 1px;
    margin: 22px 0 6px;
    background: #a0a0a0;
  }

  .radios {
    display: flex;
    gap: 9px;
    height: 20px;
  }

  .radios label {
    display: flex;
    align-items: center;
    gap: 3px;
  }

  .radios input {
    box-sizing: border-box;
    appearance: none;
    width: 13px;
    height: 13px;
    margin: 0;
    border: 1px solid #333;
    border-radius: 50%;
    background: #fff;
  }

  .radios input:checked {
    background: radial-gradient(circle, #333 0 3px, #fff 4px);
  }

  .time-field {
    box-sizing: border-box;
    display: flex;
    align-items: center;
    width: 151px;
    height: 22px;
    padding-left: 2px;
    border: 2px solid #777;
    border-right-color: #fff;
    border-bottom-color: #fff;
    background: #c0c0c0;
    font-family: "Open Sans", sans-serif;
    font-size: 12px;
    line-height: 17px;
  }

  .digit {
    width: 9px;
    color: #0000b4;
    text-align: center;
  }

  .comma {
    width: 6px;
    color: #0000b4;
    text-align: center;
  }

  .unit {
    flex: 1;
    text-align: center;
    color: #222;
  }

  .unit:last-of-type {
    flex: 0 0 9px;
    text-align: right;
  }

  .time-format {
    width: 9px;
    height: 18px;
    background: #e0e0e0;
  }

  .status {
    display: flex;
    align-items: center;
    height: 22px;
    padding: 1px 0 0 2px;
    border-top: 1px solid #d8d8d8;
    font-family: "Open Sans", sans-serif;
    font-size: 11px;
  }

  .status span {
    box-sizing: border-box;
    height: 20px;
    padding-left: 4px;
    border-left: 1px solid #d8d8d8;
    line-height: 20px;
  }

  .status span:first-child {
    width: 126px;
  }

  .status span:nth-child(2) {
    flex: 1;
  }

  .status span:last-child {
    width: 151px;
  }

  .dialog {
    position: absolute;
    left: 599px;
    top: 430px;
    box-sizing: border-box;
    width: 610px;
    border: 1px solid #fff;
    border-top: 0;
    background: #f0f0f0;
    box-shadow: 0 0 1px #666, 0 6px 18px rgba(0, 0, 0, 0.55);
    font-size: 11px;
  }

  .dialog header {
    display: flex;
    height: 31px;
    background: #fff;
    font-family: "Open Sans", sans-serif;
  }

  .dialog h2 {
    flex: 1;
    margin: 0 0 0 8px;
    font-size: 11px;
    font-weight: normal;
    line-height: 31px;
  }

  .dialog header button {
    width: 46px;
  }

  .plot-row {
    display: flex;
  }

  .plot .small {
    font-size: 11px;
  }

  .plot-row .vscroll {
    width: 15px;
    height: 330px;
    margin-top: 5px;
    border: 0;
  }

  .zoom {
    display: flex;
    flex-direction: column;
    align-items: center;
    width: 38px;
    height: 337px;
    padding: 3px 0 0 3px;
    box-sizing: border-box;
  }

  .zoom input {
    appearance: none;
    flex: 1;
    width: 20px;
    min-height: 0;
    margin: 10px 0 11px;
    writing-mode: vertical-lr;
    background: linear-gradient(#dcdcdc, #dcdcdc) center / 3px 100% no-repeat;
  }

  .zoom input::-webkit-slider-thumb {
    appearance: none;
    width: 19px;
    height: 11px;
    border: 0;
    background: #0078d7;
    clip-path: polygon(0 0, 75% 0, 100% 50%, 75% 100%, 0 100%);
  }

  .readout {
    display: flex;
    align-items: center;
    margin: 8px 54px 7px 43px;
  }

  .readout input {
    box-sizing: border-box;
    flex: 1;
    min-width: 0;
    height: 21px;
    padding: 0 5px;
    border: 1px solid #7a7a7a;
    background: #fff;
    font: inherit;
  }

  .readout label {
    width: 37px;
  }

  .readout label:nth-of-type(2) {
    width: 28px;
  }

  .options {
    display: grid;
    grid-template-columns: 67px 164px 37px 112px 85px 99px;
    column-gap: 5px;
    row-gap: 6px;
    align-items: center;
    white-space: nowrap;
  }

  .options > label {
    justify-self: end;
  }

  .options select {
    padding-left: 2px;
  }

  .options button {
    box-sizing: border-box;
    height: 21px;
    margin-left: 5px;
    width: 85px;
    border: 1px solid #adadad;
    background: #e1e1e1;
  }

  .options button:nth-of-type(2) {
    width: 99px;
    margin-left: 11px;
  }

  .options .close {
    width: 73px;
    margin-left: 24px;
  }

  .options .check {
    display: flex;
    align-items: center;
    justify-self: start;
    gap: 3px;
    margin-left: 4px;
  }

  .check input {
    box-sizing: border-box;
    width: 13px;
    height: 13px;
    margin: 0;
    appearance: none;
    border: 1px solid #333;
    background: #fff;
  }

  .check input:checked {
    background: #fff url("data:image/svg+xml,%3Csvg xmlns='http://www.w3.org/2000/svg' width='11' height='11'%3E%3Cpath d='M1.500 5.500 4.500 8.500 9.500 2' fill='none' stroke='%23222' stroke-width='1.300'/%3E%3C/svg%3E");
  }

  .dialog-status {
    display: flex;
    align-items: flex-end;
    justify-content: flex-end;
    height: 23px;
    margin-top: 8px;
    border-top: 1px solid #d8d8d8;
  }
</style>
